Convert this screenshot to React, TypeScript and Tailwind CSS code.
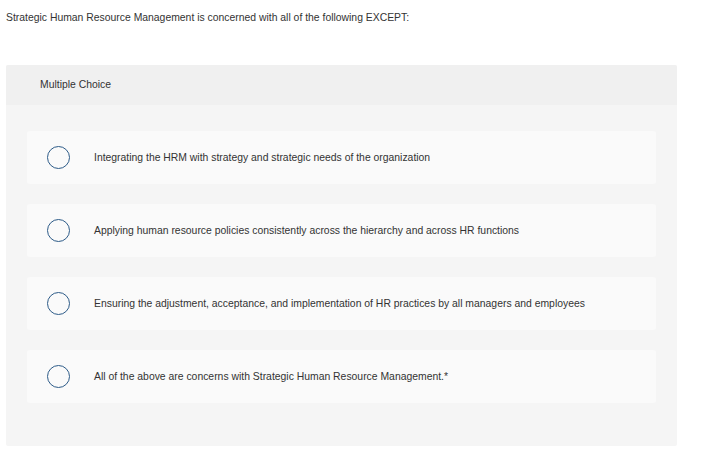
const options = [
  "Integrating the HRM with strategy and strategic needs of the organization",
  "Applying human resource policies consistently across the hierarchy and across HR functions",
  "Ensuring the adjustment, acceptance, and implementation of HR practices by all managers and employees",
  "All of the above are concerns with Strategic Human Resource Management.*",
];

const App = () => {
  return (
    <div className="bg-white min-h-screen text-[10.4px] text-[#333] font-['Liberation_Sans',Arial,sans-serif]">
      <div className="px-[6px] pt-[11px] leading-[13px]">
        Strategic Human Resource Management is concerned with all of the following EXCEPT:
      </div>
      <div className="mx-[6px] mt-[41px] w-[671px] rounded-[2px] bg-[#f5f5f5]">
        <div className="h-[40px] flex items-center pl-[34px] bg-[#f0f0f0] rounded-t-[2px]">
          Multiple Choice
        </div>
        <div className="px-[21px] pt-[26px] pb-[43px] flex flex-col gap-[20px]">
          {options.map((opt) => (
            <div
              key={opt}
              className="h-[53px] flex items-center rounded-[3px] bg-[#fafafa] pl-[20px]"
            >
              <span className="w-[23px] h-[23px] rounded-full border-[1.5px] border-[#2d5b88] shrink-0" />
              <span className="ml-[24px]">{opt}</span>
            </div>
          ))}
        </div>
      </div>
    </div>
  );
};

export default App;
